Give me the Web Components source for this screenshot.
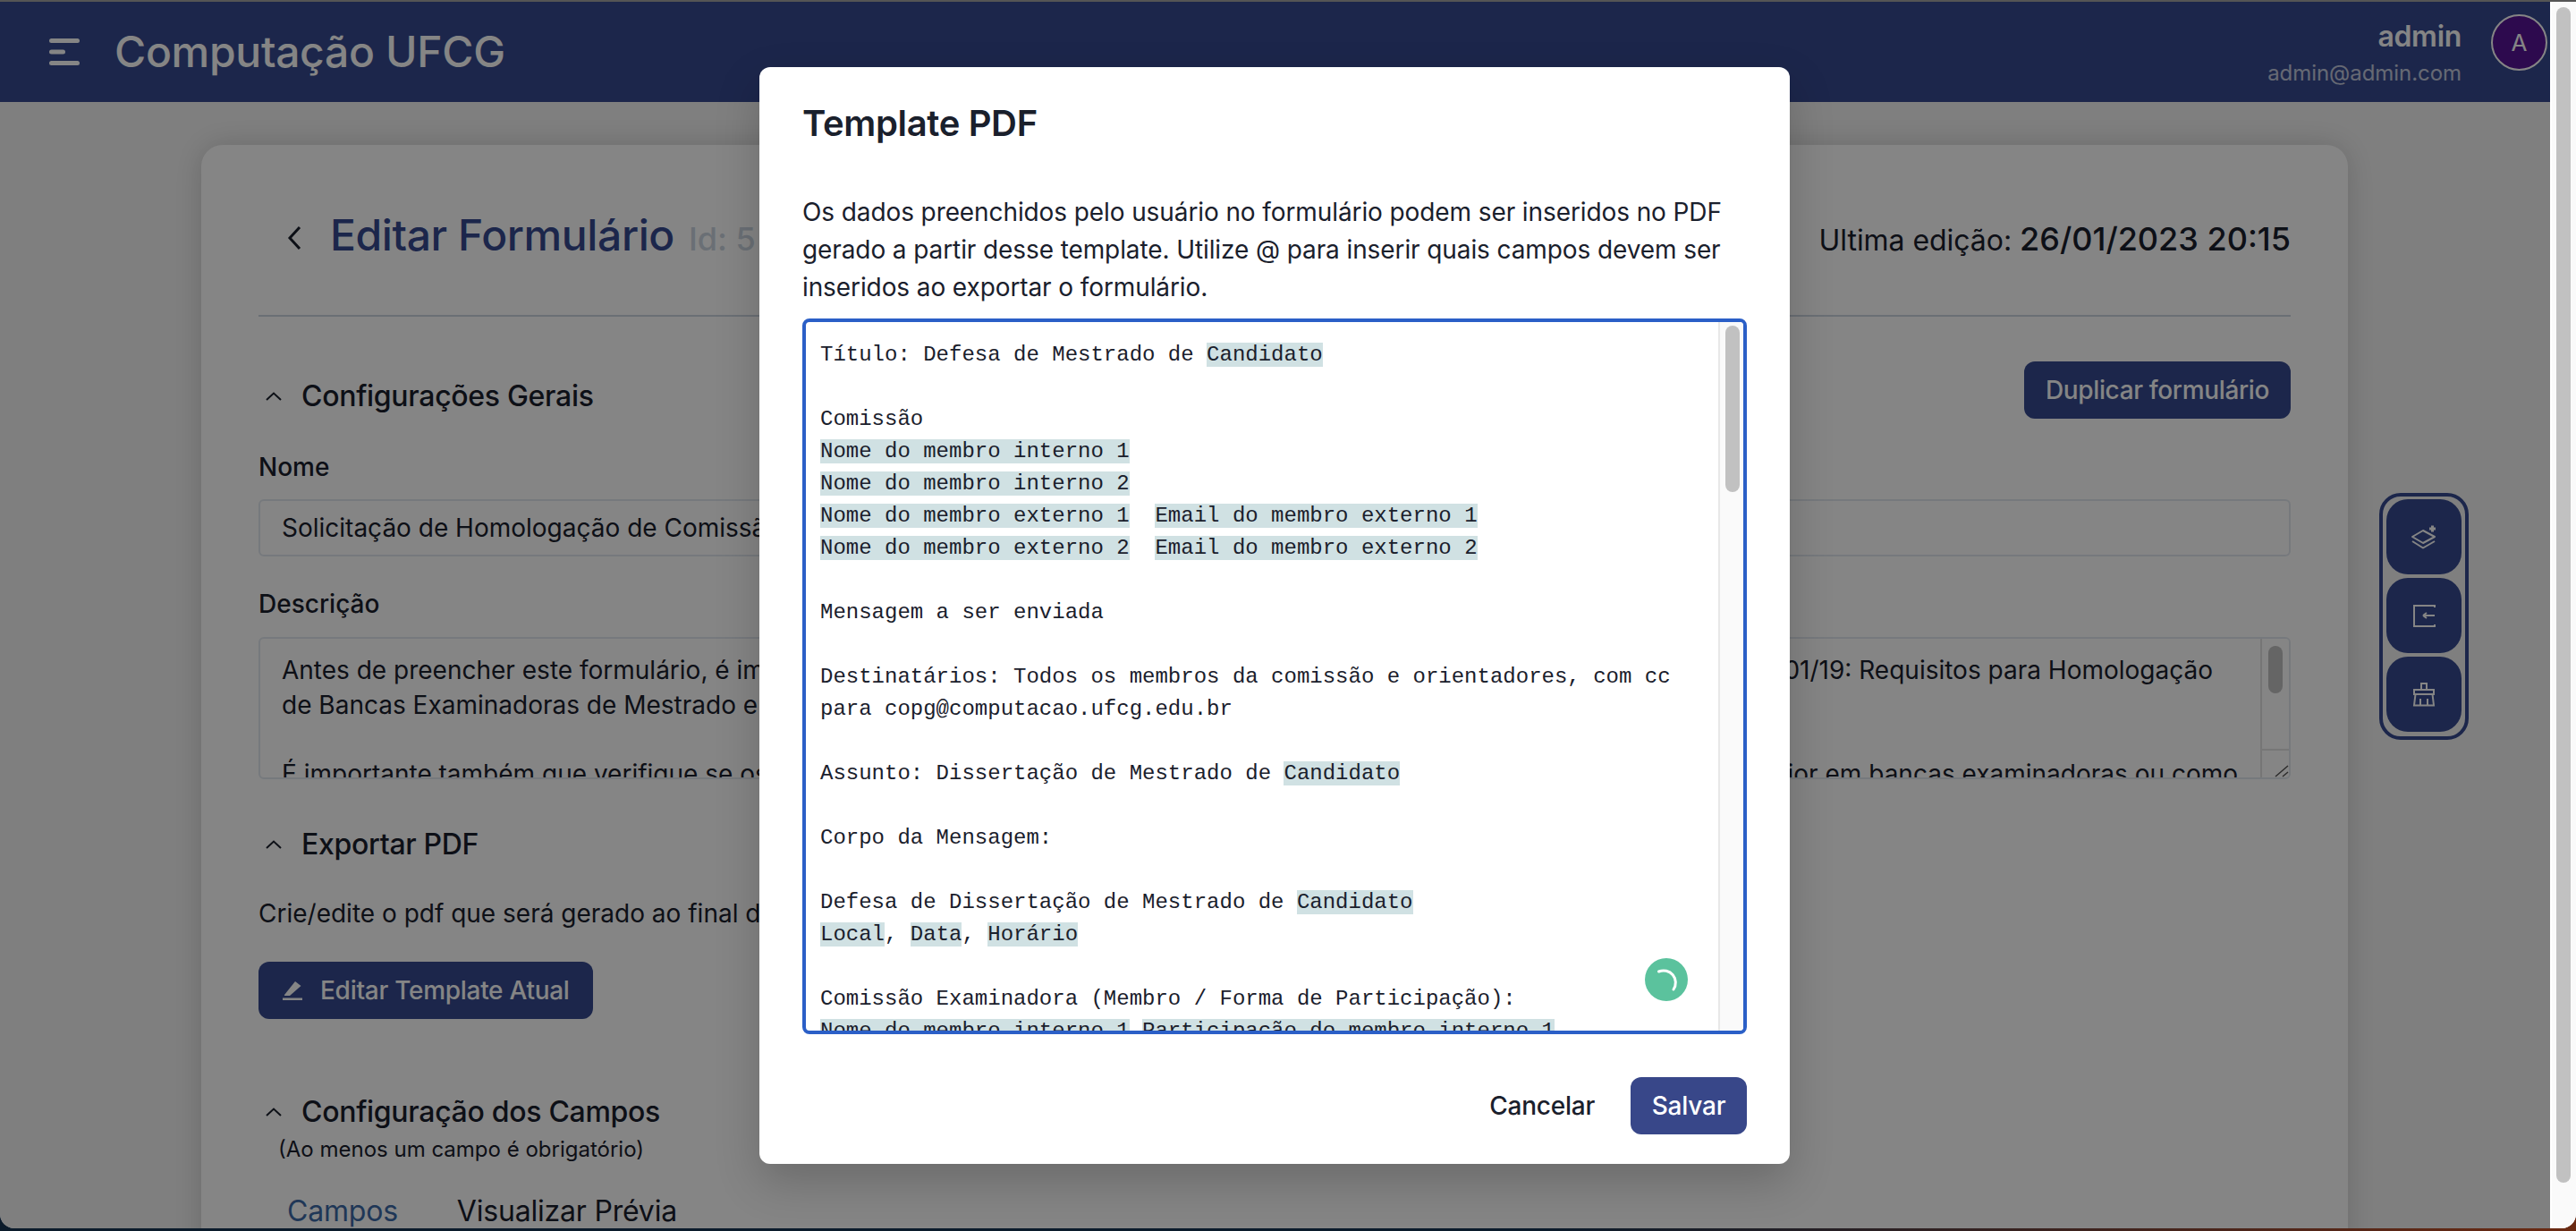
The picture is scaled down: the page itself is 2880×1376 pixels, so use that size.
<!doctype html>
<html><head><meta charset="utf-8"><style>
html,body{margin:0;height:100%;overflow:hidden}
body{font-family:Inter,sans-serif;background:linear-gradient(90deg,#0b1b2b,#0b1b2b 60%,#6b2a12)}
</style></head><body>
<app-root></app-root>
<script>
function def(name, html){customElements.define(name,class extends HTMLElement{constructor(){super();this.attachShadow({mode:'open'}).innerHTML=html}})}
def('app-header',`<style>
:host{display:flex;align-items:center;height:112px;background:#364a90;color:#fff;padding:0 3px 0 55px;flex:none;box-sizing:border-box}
.t{font-size:48px;font-weight:500;margin-left:39px;flex:1;letter-spacing:-.3px;padding-bottom:2px}
.u{text-align:right;margin-right:33px;align-self:flex-start;margin-top:20px}
.n{font-size:32px;font-weight:600;line-height:38px;letter-spacing:-.3px}
.e{font-size:24px;line-height:36px;margin-top:4px;opacity:.7;letter-spacing:-.05px}
.a{align-self:flex-start;margin-top:14px;width:63px;height:63px;border:2px solid #fff;border-radius:50%;background:#571496;box-sizing:border-box;display:flex;align-items:center;justify-content:center;font-size:26px}
svg{display:block}
</style>
<svg width="34" height="30" viewBox="0 0 34 30"><rect y="0" width="34" height="5" rx="2.500" fill="#fff"/><rect y="12.500" width="18" height="5" rx="2.500" fill="#fff"/><rect y="25" width="34" height="5" rx="2.500" fill="#fff"/></svg>
<div class="t">Computação UFCG</div>
<div class="u"><div class="n">admin</div><div class="e">admin@admin.com</div></div>
<div class="a">A</div>`);
def('btn-solid',`<style>
:host{display:inline-flex;align-items:center;height:64px;padding:0 24px;background:#364a90;color:#fff;border-radius:12px;font-size:28px;font-weight:500;box-sizing:border-box;flex:none}
</style><slot></slot>`);
def('section-head',`<style>
:host{display:flex;align-items:center;gap:22px;font-size:32px;font-weight:500;color:#1a202c;padding-left:8px;line-height:40px;letter-spacing:-.3px}
</style><svg width="18" height="10" viewBox="0 0 18 10" fill="none" stroke="#1a202c" stroke-width="2"><path d="M1 9 L9 1.500 L17 9"/></svg><slot></slot>`);
def('tool-dock',`<style>
:host{position:absolute;left:2660px;top:551px;width:100px;height:276px;box-sizing:border-box;border:4px solid #364a90;border-radius:24px;padding:3px 4px;display:flex;flex-direction:column;gap:4px}
.b{width:84px;height:84px;background:#364a90;border-radius:24px;display:flex;align-items:center;justify-content:center}
</style>
<div class="b"><svg width="32" height="32" viewBox="0 0 32 32" fill="none" stroke="#fff" stroke-width="2" stroke-linejoin="round"><path d="M3 16 L15 9 L28 16 L15 23Z"/><path d="M3 21 L15 28.500 L28 21"/><path d="M25.500 3.500v7M22 7h7" stroke-width="3"/></svg></div>
<div class="b"><svg width="28" height="28" viewBox="0 0 28 28" fill="none" stroke="#fff" stroke-width="2"><path d="M26 5V3H3V26H26V24M13 14H26M13 14l4-3M13 14l4 3"/></svg></div>
<div class="b"><svg width="28" height="28" viewBox="0 0 28 28" fill="none" stroke="#fff" stroke-width="2"><path d="M11 9V2H17V9M3 9H25V14H3ZM4.500 14L3 26.500H25L23.500 14M10 19V26.500M18 19V26.500"/></svg></div>`);
def('form-card',`<style>
:host{display:block;flex:none;margin:48px 0 0 225px;width:2400px;height:1400px;background:#fff;border-radius:24px;box-shadow:0 0 34px rgba(0,0,0,.16);box-sizing:border-box;padding:0 64px;color:#1a202c}
.top{display:flex;align-items:baseline;height:192px;border-bottom:2px solid #cbd5e0;padding:77px 0 0 32px;box-sizing:border-box}
.top svg{align-self:flex-start;margin-top:13px}
h1{margin:0 0 0 32px;font-size:48px;font-weight:500;color:#364a90;line-height:1;letter-spacing:-.4px}
.id{font-size:36px;font-weight:500;color:#cbd5e0;margin-left:16px;flex:1;line-height:1}
.ed{font-size:32px;line-height:1;letter-spacing:-.05px}.ed b{font-size:36px;font-weight:500;letter-spacing:0}
.row{display:flex;justify-content:space-between;align-items:center;margin-top:50px}
.lbl{font-size:28px;font-weight:500;margin:36px 0 18px;line-height:36px}
.box{border:2px solid #e2e8f0;border-radius:6px;font-size:28px;padding:0 24px;height:64px;line-height:60px;box-sizing:border-box;white-space:nowrap;overflow:hidden}
.ta{height:159px;line-height:38.500px;padding:16px 24px 0;position:relative}
.l{display:flex;justify-content:space-between;height:38.500px}
.l1{width:2159px}.l4{width:2187px}
.tsb{position:absolute;right:0;top:0;bottom:0;width:32px;background:#fff;border-left:2px solid #e2e2e2;box-sizing:border-box}
.tth{position:absolute;left:7px;top:8px;width:16px;height:53px;border-radius:8px;background:#c1c1c1}
.tcr{position:absolute;left:0;right:0;bottom:0;height:30px;border-top:2px solid #e2e2e2}
.tcr svg{position:absolute;right:0;bottom:0}
.p{font-size:28px;margin:37px 0 34px;line-height:40px}
.sub{font-size:24px;margin:6px 0 0 22px;line-height:32px}
.tabs{display:flex;gap:66px;font-size:32px;margin:33px 0 0 32px;line-height:40px;letter-spacing:-.2px}
.tabs span:first-child{color:#3d6aa8}
svg.pen{display:block;margin-right:20px}
</style>
<div class="top"><svg width="16" height="28" viewBox="0 0 16 28" fill="none" stroke="#1a202c" stroke-width="3"><path d="M14 2 L3 14 L14 26"/></svg><h1>Editar Formulário</h1><span class="id">Id: 5</span><span class="ed">Ultima edição: <b>26/01/2023 20:15</b></span></div>
<div class="row"><section-head style="padding-top:14px">Configurações Gerais</section-head><btn-solid style="letter-spacing:-.36px">Duplicar formulário</btn-solid></div>
<div class="lbl">Nome</div><div class="box">Solicitação de Homologação de Comissão Examinadora</div>
<div class="lbl" style="margin-top:35px;margin-bottom:19px">Descrição</div>
<div class="box ta"><div class="l l1"><span>Antes de preencher este formulário, é importante que você leia a Resolução</span><span>01/19: Requisitos para Homologação</span></div><div class="l"><span>de Bancas Examinadoras de Mestrado e Doutorado.</span></div><div class="l"></div><div class="l l4"><span>É importante também que verifique se os membros indicados possuem experiência</span><span>anterior em bancas examinadoras ou como</span></div>
<div class="tsb"><div class="tth"></div><div class="tcr"><svg width="16" height="14" viewBox="0 0 16 14" fill="none" stroke="#555" stroke-width="1.500"><path d="M1 13L15 1M9 13L15 8"/></svg></div></div></div>
<section-head style="margin-top:53px">Exportar PDF</section-head>
<div class="p">Crie/edite o pdf que será gerado ao final do preenchimento</div>
<btn-solid style="padding:0 26px 0 27px;letter-spacing:-.28px"><svg class="pen" width="22" height="22" viewBox="0 0 22 22" fill="#fff"><path d="M2 16 L14 1 L20.500 6 L8 17 H2Z"/><rect y="19.500" width="22" height="2.500"/></svg>Editar Template Atual</btn-solid>
<section-head style="margin-top:84px">Configuração dos Campos</section-head>
<div class="sub">(Ao menos um campo é obrigatório)</div>
<div class="tabs"><span>Campos</span><span>Visualizar Prévia</span></div>`);
def('hl-text',`<style>:host{background:#d0e1e3}</style><slot></slot>`);
def('template-editor',`<style>
:host{display:flex;height:800px;border:4px solid #2b5fc7;border-radius:8px;box-sizing:border-box;position:relative;overflow:hidden;flex:none}
.c{flex:1;font-family:"Liberation Mono",monospace;font-size:24px;line-height:36px;color:#1a202c;padding:19px 16px;white-space:pre;overflow:hidden}
.sb{width:28px;background:#fafafa;border-left:2px solid #e8e8e8;padding:4px 5px;box-sizing:border-box;flex:none}
.th{width:16px;height:186px;background:#c1c1c1;border-radius:8px;margin-left:1px}
.fab{position:absolute;right:62px;bottom:33px;width:48px;height:48px;border-radius:50%;background:#5bc29d;display:flex;align-items:center;justify-content:center}
</style>
<div class="c"><slot></slot></div><div class="sb"><div class="th"></div></div>
<div class="fab"><svg width="48" height="48" viewBox="0 0 48 48" fill="none" stroke="#fff" stroke-width="3" stroke-linecap="round"><path d="M15.500 15 A13.500 13.500 0 0 1 32 35"/></svg></div>`);
def('pdf-modal',`<style>
:host{position:absolute;left:849px;top:75px;width:1152px;height:1226px;background:#fff;border-radius:12px;box-sizing:border-box;padding:35px 48px 32px;display:flex;flex-direction:column;color:#1a202c;box-shadow:0 20px 50px rgba(0,0,0,.2)}
h2{margin:0;font-size:40px;font-weight:600;line-height:56px;letter-spacing:-.35px}
p{margin:50px 0 14px;font-size:28px;line-height:42px;letter-spacing:-.1px}
.f{display:flex;justify-content:flex-end;align-items:center;margin-top:48px}
.c{font-size:28px;font-weight:500;margin-right:40px;letter-spacing:-.25px}
btn-solid{background:#384789;letter-spacing:-.2px;width:130px;padding:0;justify-content:center}
</style>
<h2>Template PDF</h2>
<p>Os dados preenchidos pelo usuário no formulário podem ser inseridos no PDF gerado a partir desse template. Utilize @ para inserir quais campos devem ser inseridos ao exportar o formulário.</p>
<slot></slot>
<div class="f"><span class="c">Cancelar</span><btn-solid>Salvar</btn-solid></div>`);
def('page-scrollbar',`<style>
:host{width:29px;flex:none;background:#fafafa;border-left:2px solid #fff;box-sizing:border-box;padding:8px 6px 0 5px}
div{height:1314px;background:#c1c1c1;border-radius:8px}
</style><div></div>`);
def('app-root',`<style>
:host{display:flex;position:relative;width:2880px;height:1373px;overflow:hidden;background:#f4f4f4;border-radius:0 0 16px 16px}
.main{position:relative;flex:1;min-width:0;display:flex;flex-direction:column;overflow:hidden;padding-top:2px;box-sizing:border-box}
.ov{position:absolute;inset:0;background:rgba(0,0,0,.48)}
.strip{position:absolute;left:0;top:0;right:0;height:2px;background:#555}
</style>
<div class="main"><app-header></app-header><form-card></form-card><tool-dock></tool-dock><div class="ov"></div></div>
<page-scrollbar></page-scrollbar>
<pdf-modal><template-editor>Título: Defesa de Mestrado de <hl-text>Candidato</hl-text>

Comissão
<hl-text>Nome do membro interno 1</hl-text>
<hl-text>Nome do membro interno 2</hl-text>
<hl-text>Nome do membro externo 1</hl-text>  <hl-text>Email do membro externo 1</hl-text>
<hl-text>Nome do membro externo 2</hl-text>  <hl-text>Email do membro externo 2</hl-text>

Mensagem a ser enviada

Destinatários: Todos os membros da comissão e orientadores, com cc
para copg@computacao.ufcg.edu.br

Assunto: Dissertação de Mestrado de <hl-text>Candidato</hl-text>

Corpo da Mensagem:

Defesa de Dissertação de Mestrado de <hl-text>Candidato</hl-text>
<hl-text>Local</hl-text>, <hl-text>Data</hl-text>, <hl-text>Horário</hl-text>

Comissão Examinadora (Membro / Forma de Participação):
<hl-text>Nome do membro interno 1</hl-text> <hl-text>Participação do membro interno 1</hl-text></template-editor></pdf-modal>
<div class="strip"></div>`);
</script></body></html>
